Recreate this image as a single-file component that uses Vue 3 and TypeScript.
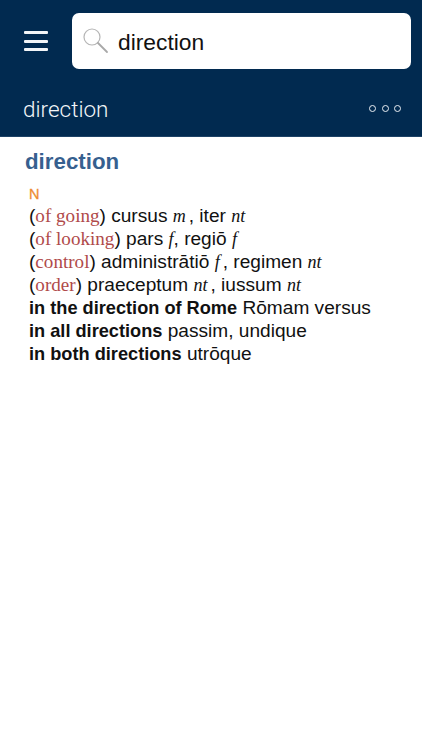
<script setup lang="ts">
interface Seg { t: string; k?: 'gloss' | 'gram' | 'bold'; pad?: boolean }
const lines: Seg[][] = [
  [{ t: '(' }, { t: 'of going', k: 'gloss' }, { t: ') cursus ' }, { t: 'm', k: 'gram', pad: true }, { t: ', iter ' }, { t: 'nt', k: 'gram' }],
  [{ t: '(' }, { t: 'of looking', k: 'gloss' }, { t: ') pars ' }, { t: 'f', k: 'gram' }, { t: ', regiō ' }, { t: 'f', k: 'gram' }],
  [{ t: '(' }, { t: 'control', k: 'gloss' }, { t: ') administrātiō ' }, { t: 'f', k: 'gram', pad: true }, { t: ', regimen ' }, { t: 'nt', k: 'gram' }],
  [{ t: '(' }, { t: 'order', k: 'gloss' }, { t: ') praeceptum ' }, { t: 'nt', k: 'gram', pad: true }, { t: ', iussum ' }, { t: 'nt', k: 'gram' }],
  [{ t: 'in the direction of Rome', k: 'bold' }, { t: ' Rōmam versus' }],
  [{ t: 'in all directions', k: 'bold' }, { t: ' passim, undique' }],
  [{ t: 'in both directions', k: 'bold' }, { t: ' utrōque' }],
]
</script>

<template>
  <div class="page">
    <header class="header">
      <div class="search-row">
        <button class="menu" aria-label="Menu"><span></span><span></span><span></span></button>
        <div class="search">
          <svg class="lens" width="26" height="26" viewBox="0 0 26 26" fill="none">
            <circle cx="9" cy="9" r="8" stroke="#b5b5b5" stroke-width="1.2" />
            <path d="M15 15L24 24" stroke="#a8a8a8" stroke-width="1.8" stroke-linecap="round" />
          </svg>
          <span class="query">direction</span>
        </div>
      </div>
      <div class="title-row">
        <span class="title">direction</span>
        <div class="dots"><i></i><i></i><i></i></div>
      </div>
    </header>
    <main class="entry">
      <h1 class="head">direction</h1>
      <div class="pos">N</div>
      <div class="body">
        <div v-for="(line, i) in lines" :key="i" class="line"><span v-for="(s, j) in line" :key="j" :class="[s.k, { pad: s.pad }]">{{ s.t }}</span></div>
      </div>
    </main>
  </div>
</template>

<style scoped>
.page { width: 422px; height: 750px; background: #fff; font-family: "Liberation Sans", Arial, sans-serif; overflow: hidden; }
.header { background: #012a50; height: 137px; box-sizing: border-box; padding-top: 13px; border-bottom: 1px solid #1d4266; }
.search-row { display: flex; align-items: center; height: 56px; padding: 0 11px 0 24px; }
.menu { width: 24px; height: 20px; padding: 0; border: 0; background: none; display: flex; flex-direction: column; justify-content: space-between; margin-right: 24px; flex: none; }
.menu span { display: block; height: 3px; border-radius: 1px; background: #f2f5f8; }
.search { flex: 1; height: 56px; background: #fff; border-radius: 7px; display: flex; align-items: center; padding-left: 11px; box-sizing: border-box; }
.lens { flex: none; margin-right: 9px; }
.query { font-size: 22.8px; color: #111; padding-top: 2px; }
.title-row { display: flex; align-items: center; justify-content: space-between; height: 67px; padding: 12px 21px 0 23px; box-sizing: border-box; }
.title { font-family: "Roboto", "Liberation Sans", sans-serif; font-size: 22.5px; font-weight: 300; color: #f2f5f8; }
.dots { display: flex; gap: 5.5px; }
.dots i { width: 7px; height: 7px; box-sizing: border-box; border: 1.7px solid #e9eef3; border-radius: 50%; display: block; }
.entry { padding: 12px 20px 0 25px; }
.head { margin: 0; font-size: 22.3px; line-height: 26px; font-weight: 700; color: #36608f; }
.pos { margin: 12px 0 0 4px; font-size: 14.5px; line-height: 15px; color: #ee8b33; -webkit-text-stroke: 0.3px #ee8b33; }
.body { margin: 2px 0 0 4px; font-size: 19.1px; color: #111; }
.line { white-space: pre; height: 23px; line-height: 23px; }
.gloss { font-family: "Liberation Serif", serif; color: #b04a4a; }
.gram { font-family: "Liberation Serif", serif; font-style: italic; font-size: 18px; }
.pad { padding-right: 3px; }
.bold { font-weight: 700; font-size: 18.2px; }
</style>
